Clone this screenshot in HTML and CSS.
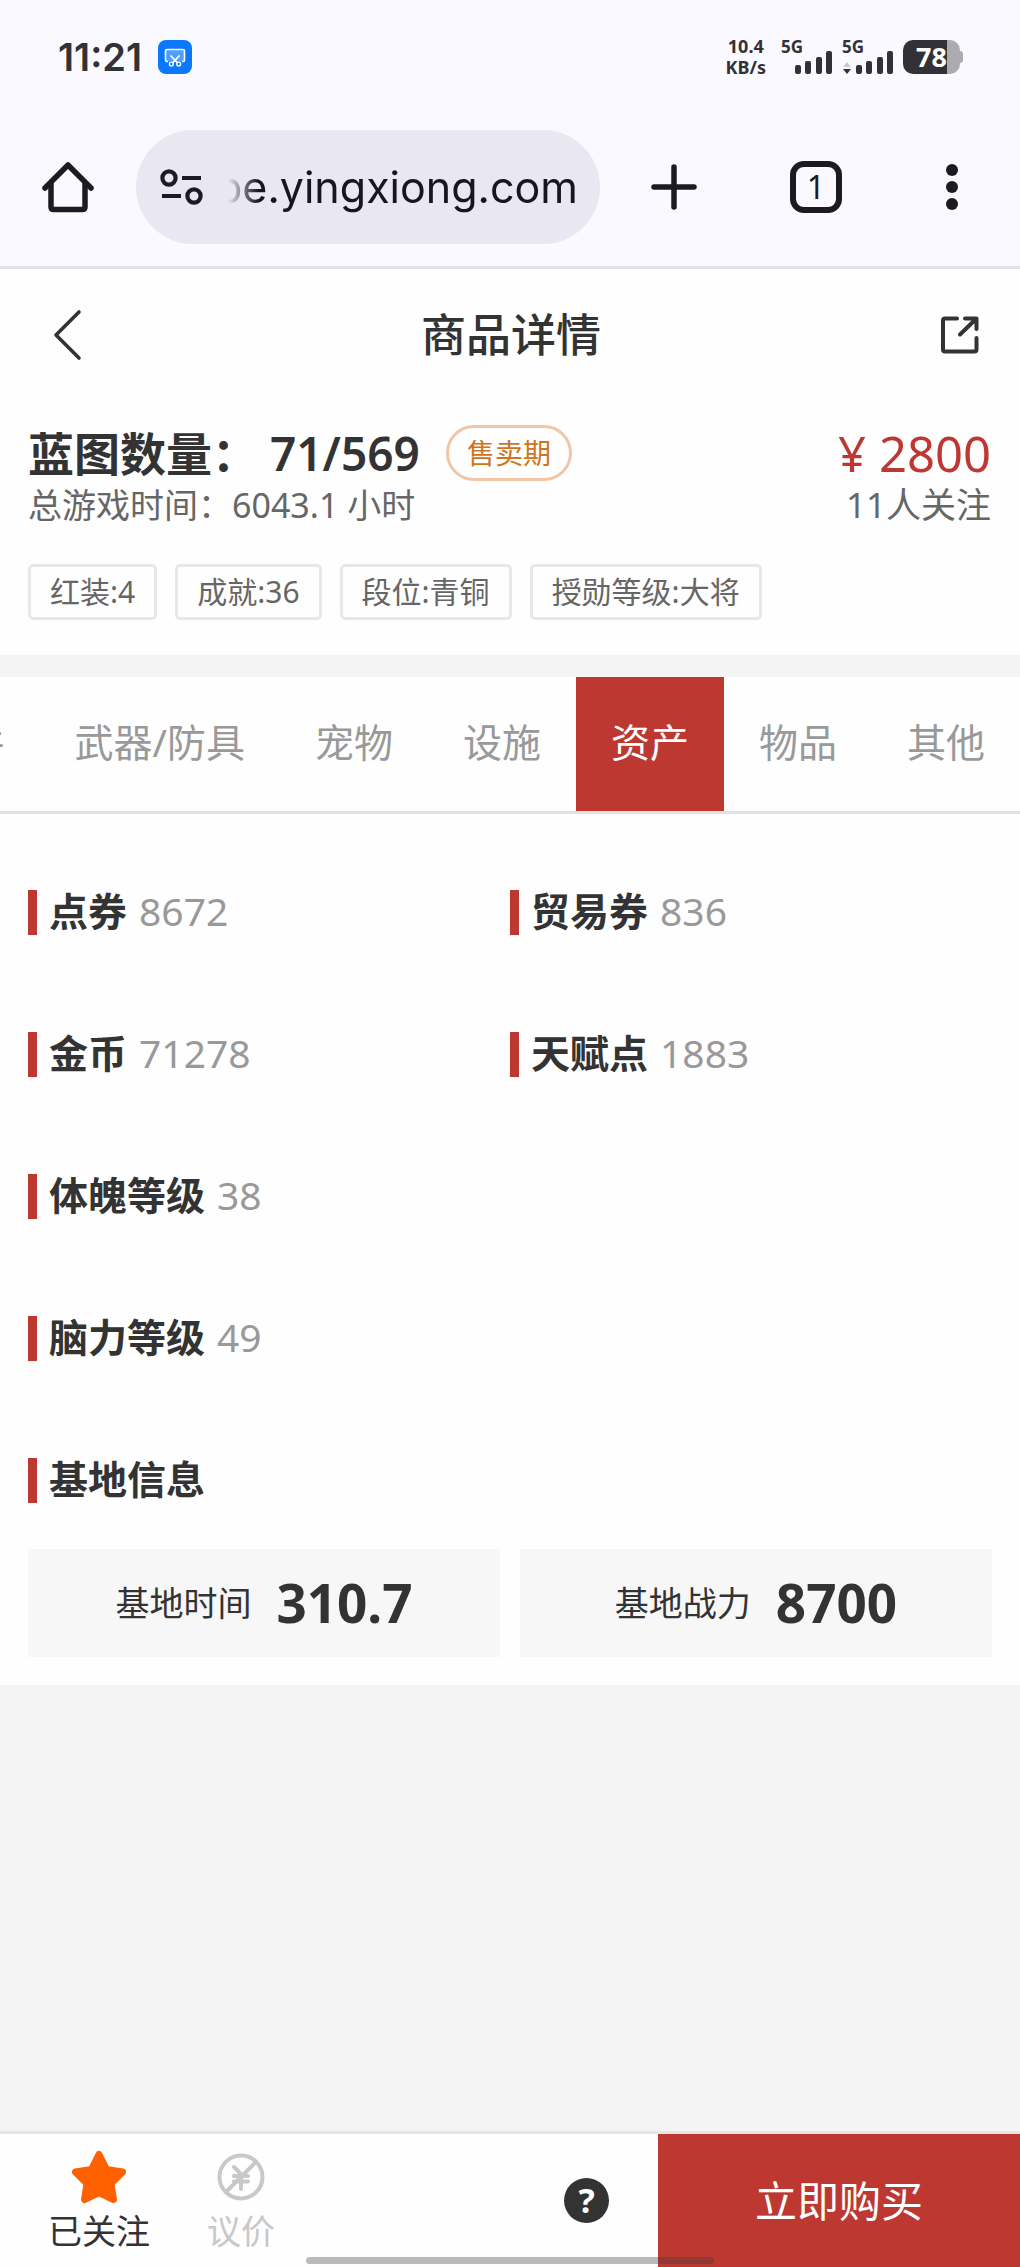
FILE: index.html
```html
<!DOCTYPE html>
<html lang="zh-CN">
<head>
  <meta charset="UTF-8">
  <meta name="viewport" content="width=device-width, initial-scale=1.0">
  <title>商品详情</title>
  <link rel="stylesheet" href="styles.css">
</head>
<body>
  <div class="browser">
    <div class="status-bar">
      <span class="status-time">11:21</span>
      <svg class="status-app" viewBox="0 0 34 34">
        <rect width="34" height="34" rx="8" fill="#0b78fb"/>
        <path d="M10 21.500H9A1.500 1.500 0 0 1 7.500 20V11A1.500 1.500 0 0 1 9 9.500H25A1.500 1.500 0 0 1 26.500 11V20A1.500 1.500 0 0 1 25 21.500H24" fill="#4f9dfc" stroke="#fff" stroke-width="1.600"/>
        <path d="M12.500 15.500L19.500 23M21.500 15.500L14.500 23" stroke="#fff" stroke-width="1.800"/>
        <circle cx="13.300" cy="24" r="1.900" fill="#0b78fb" stroke="#fff" stroke-width="1.400"/>
        <circle cx="20.700" cy="24" r="1.900" fill="#0b78fb" stroke="#fff" stroke-width="1.400"/>
      </svg>
      <div class="status-right">
        <div class="net-speed"><b>10.4</b><span>KB/s</span></div>
        <svg class="signal" viewBox="0 0 52 48">
          <text x="0" y="20">5G</text>
          <rect x="14" y="32" width="6" height="9" rx="2"/>
          <rect x="24" y="28" width="6" height="13" rx="2"/>
          <rect x="35" y="24" width="6" height="17" rx="2"/>
          <rect x="45" y="18" width="6" height="23" rx="2"/>
        </svg>
        <svg class="signal" viewBox="0 0 52 48">
          <text x="0" y="20">5G</text>
          <path d="M1 34L5 29L9 34z" fill="#c9c8ce"/>
          <path d="M1 36H9L5 41z"/>
          <rect x="14" y="32" width="6" height="9" rx="2"/>
          <rect x="24" y="28" width="6" height="13" rx="2"/>
          <rect x="35" y="24" width="6" height="17" rx="2"/>
          <rect x="45" y="18" width="6" height="23" rx="2"/>
        </svg>
        <div class="battery"><span class="battery-level">78</span></div>
      </div>
    </div>

    <div class="toolbar">
      <button class="tool-btn" aria-label="主页">
        <svg width="54" height="54" viewBox="0 0 54 54" fill="none" stroke="#1b1b21" stroke-width="5.500" stroke-linecap="round" stroke-linejoin="round">
          <path d="M4 28L27 5L50 28"/>
          <path d="M10 23V47Q10 49.500 12.500 49.500H41.500Q44 49.500 44 47V23"/>
        </svg>
      </button>
      <div class="address">
        <svg width="44" height="38" viewBox="0 0 44 38" fill="none" stroke="#1b1b21" stroke-width="4.200">
          <circle cx="9" cy="10" r="6.600"/>
          <path d="M22 10H41M2 28H21"/>
          <circle cx="34" cy="28" r="6.600"/>
        </svg>
        <input class="address-input" type="text" value="be.yingxiong.com" aria-label="网址">
      </div>
      <button class="tool-btn tool-add" aria-label="新标签页">
        <svg width="46" height="46" viewBox="0 0 46 46" stroke="#1b1b21" stroke-width="5.500" stroke-linecap="round">
          <path d="M23 3V43M3 23H43"/>
        </svg>
      </button>
      <button class="tool-btn" aria-label="标签页"><span class="tab-count">1</span></button>
      <button class="tool-btn" aria-label="菜单">
        <svg width="12" height="46" viewBox="0 0 12 46" fill="#1b1b21">
          <circle cx="6" cy="6" r="6"/>
          <circle cx="6" cy="23" r="6"/>
          <circle cx="6" cy="40" r="6"/>
        </svg>
      </button>
    </div>
  </div>

  <header class="app-header">
    <button class="icon-btn" aria-label="返回">
      <svg width="30" height="52" viewBox="0 0 30 52" fill="none" stroke="#333" stroke-width="3.600" stroke-linecap="round" stroke-linejoin="round">
        <path d="M27 3L4 26L27 49"/>
      </svg>
    </button>
    <h1>商品详情</h1>
    <button class="icon-btn" aria-label="分享">
      <svg width="40" height="40" viewBox="0 0 40 40" fill="none" stroke="#333" stroke-width="4" stroke-linecap="round" stroke-linejoin="round">
        <path d="M17 3.500H5Q3 3.500 3 5.500V34.500Q3 36.500 5 36.500H34.500Q36.500 36.500 36.500 34.500V23"/>
        <path d="M25 3.500H36.500V14M36 4L20 19.500"/>
      </svg>
    </button>
  </header>

  <section class="product">
    <div class="product-row">
      <h2>蓝图数量： 71/569</h2>
      <span class="status-pill">售卖期</span>
      <span class="price">¥ 2800</span>
    </div>
    <div class="product-row product-sub">
      <span>总游戏时间：6043.1 小时</span>
      <span class="followers">11人关注</span>
    </div>
    <ul class="tags">
      <li>红装:4</li>
      <li>成就:36</li>
      <li>段位:青铜</li>
      <li>授勋等级:大将</li>
    </ul>
  </section>

  <nav class="tabs">
    <a href="#">配件</a>
    <a href="#">武器/防具</a>
    <a href="#">宠物</a>
    <a href="#">设施</a>
    <a href="#" class="active">资产</a>
    <a href="#">物品</a>
    <a href="#">其他</a>
  </nav>

  <main class="assets">
    <div class="asset-grid">
      <div class="asset"><h3>点券</h3><span>8672</span></div>
      <div class="asset"><h3>贸易券</h3><span>836</span></div>
      <div class="asset"><h3>金币</h3><span>71278</span></div>
      <div class="asset"><h3>天赋点</h3><span>1883</span></div>
      <div class="asset wide"><h3>体魄等级</h3><span>38</span></div>
      <div class="asset wide"><h3>脑力等级</h3><span>49</span></div>
      <div class="asset wide"><h3>基地信息</h3></div>
    </div>
    <div class="base-info">
      <div class="base-card"><span>基地时间</span><strong>310.7</strong></div>
      <div class="base-card"><span>基地战力</span><strong>8700</strong></div>
    </div>
  </main>

  <footer class="bottom-bar">
    <button class="action">
      <svg width="56" height="54" viewBox="0 0 56 54">
        <path d="M28 4.500L35.500 19.500L51.500 22L40 33.500L42.500 49.500L28 42.500L13.500 49.500L16 33.500L4.500 22L20.500 19.500z" fill="#ff6000" stroke="#ff6000" stroke-width="7" stroke-linejoin="round"/>
      </svg>
      <span>已关注</span>
    </button>
    <button class="action muted">
      <svg width="48" height="54" viewBox="0 0 48 54" fill="none" stroke="#c8c8c8" stroke-width="4" stroke-linecap="round">
        <circle cx="24" cy="27" r="21.500"/>
        <path d="M39 12L9 42M17 17L24 24V39M17 26H31M17 31.500H31"/>
      </svg>
      <span>议价</span>
    </button>
    <button class="help" aria-label="帮助">?</button>
    <button class="buy">立即购买</button>
    <div class="home-indicator"></div>
  </footer>
</body>
</html>
```
FILE: styles.css
```css
* {
  margin: 0;
  padding: 0;
  box-sizing: border-box;
}

body {
  min-height: 100vh;
  display: flex;
  flex-direction: column;
  font-family: 'Noto Sans', 'Noto Sans CJK SC', sans-serif;
  background: #f4f4f4;
  color: #333;
  overflow-x: hidden;
}

button {
  border: none;
  background: none;
  font-family: inherit;
  color: inherit;
  cursor: pointer;
}

svg {
  display: block;
  flex-shrink: 0;
}

a {
  text-decoration: none;
}

ul {
  list-style: none;
}

/* Browser chrome */
.browser {
  background: #faf9ff;
  border-bottom: 3px solid #e2e1e7;
}

.status-bar {
  height: 114px;
  padding: 0 60px 0 58px;
  display: flex;
  align-items: center;
  color: #323236;
}

.status-time {
  font-family: 'Inter', sans-serif;
  font-size: 38px;
  font-weight: 600;
}

.status-app {
  width: 34px;
  height: 34px;
  margin-left: 16px;
}

.status-right {
  margin-left: auto;
  display: flex;
  align-items: center;
  gap: 9px;
}

.net-speed {
  display: flex;
  flex-direction: column;
  align-items: center;
  margin-right: 6px;
  font-size: 18px;
  font-weight: 700;
  line-height: 21px;
}

.net-speed b {
  font-weight: 700;
}

.signal {
  width: 52px;
  height: 48px;
  fill: #323236;
  font-size: 17px;
  font-weight: 700;
}

.battery {
  position: relative;
  width: 57px;
  height: 34px;
  border-radius: 10px;
  background: linear-gradient(90deg, #323236 78%, #acabb0 78%);
  color: #fff;
}

.battery::after {
  content: '';
  position: absolute;
  top: 11px;
  right: -3px;
  width: 3px;
  height: 12px;
  border-radius: 0 3px 3px 0;
  background: #acabb0;
}

.battery-level {
  display: block;
  text-align: center;
  font-size: 27px;
  font-weight: 700;
  line-height: 34px;
}

.toolbar {
  display: flex;
  align-items: center;
  padding: 16px 0 22px;
}

.tool-btn {
  flex: 0 0 136px;
  height: 114px;
  display: flex;
  align-items: center;
  justify-content: center;
}

.tool-add {
  flex-basis: 148px;
}

.address {
  flex: 1;
  min-width: 0;
  height: 114px;
  padding: 0 22px 0 24px;
  display: flex;
  align-items: center;
  gap: 6px;
  border-radius: 57px;
  background: #e9e7f1;
}

.address-input {
  flex: 1;
  min-width: 0;
  height: 60px;
  border: none;
  outline: none;
  background: none;
  font-family: 'Inter', sans-serif;
  font-size: 43px;
  color: #17161d;
  text-align: right;
  -webkit-mask-image: linear-gradient(90deg, transparent 18px, #000 48px);
  mask-image: linear-gradient(90deg, transparent 18px, #000 48px);
}

.tab-count {
  width: 52px;
  height: 52px;
  border: 6px solid #1b1b21;
  border-radius: 14px;
  font-size: 32px;
  line-height: 40px;
  color: #1b1b21;
}

/* Page header */
.app-header {
  height: 132px;
  padding: 0 40px 0 52px;
  display: flex;
  align-items: center;
  background: #fefefe;
}

.app-header h1 {
  flex: 1;
  padding-bottom: 6px;
  font-size: 45px;
  font-weight: 500;
  text-align: center;
}

.icon-btn {
  width: 40px;
  display: flex;
}

.icon-btn:first-child {
  width: 30px;
}

/* Product summary */
.product {
  padding: 24px 29px 35px 28px;
  margin-bottom: 22px;
  background: #fefefe;
}

.product-row {
  display: flex;
  align-items: center;
  line-height: 56px;
}

.product h2 {
  font-size: 46px;
  font-weight: 600;
}

.status-pill {
  margin-left: 26px;
  padding: 0 18px;
  border: 3px solid #f0c6a6;
  border-radius: 28px;
  font-size: 28px;
  line-height: 50px;
  color: #cf7420;
}

.price {
  margin-left: auto;
  font-size: 49px;
  color: #bd3832;
}

.product-sub {
  font-size: 34px;
  line-height: 48px;
  color: #666;
}

.followers {
  margin-left: auto;
  font-size: 35px;
}

.tags {
  display: flex;
  flex-wrap: wrap;
  gap: 18px;
  margin-top: 35px;
}

.tags li {
  padding: 0 19px;
  border: 3px solid #e8e8e8;
  border-radius: 5px;
  font-size: 30px;
  line-height: 50px;
  color: #666;
}

/* Category tabs */
.tabs {
  display: flex;
  justify-content: flex-end;
  overflow: hidden;
  background: #fefefe;
  border-bottom: 3px solid #e2e2e2;
}

.tabs a {
  flex-shrink: 0;
  padding: 0 35px 4px;
  font-size: 39px;
  line-height: 130px;
  color: #999;
}

.tabs a.active {
  background: #be3832;
  color: #fff;
}

/* Assets */
.assets {
  padding: 76px 28px 28px;
  background: #fefefe;
}

.asset-grid {
  display: grid;
  grid-template-columns: 1fr 1fr;
  row-gap: 97px;
}

.asset {
  display: flex;
  gap: 12px;
  padding: 0 0 3px 12px;
  border-left: 9px solid #be3832;
  font-size: 39px;
  line-height: 42px;
}

.asset.wide {
  grid-column: 1 / -1;
}

.asset h3 {
  font-size: 39px;
  font-weight: 700;
}

.asset span {
  color: #999;
}

.base-info {
  display: grid;
  grid-template-columns: 1fr 1fr;
  gap: 20px;
  margin-top: 46px;
}

.base-card {
  display: flex;
  align-items: center;
  justify-content: center;
  gap: 25px;
  background: #f7f7f7;
  font-size: 34px;
  line-height: 108px;
}

.base-card strong {
  font-size: 53px;
}

/* Bottom bar */
.bottom-bar {
  position: relative;
  margin-top: auto;
  padding-left: 48px;
  display: flex;
  align-items: center;
  background: #fefefe;
  border-top: 3px solid #e6e6e6;
}

.action {
  height: 133px;
  padding-top: 16px;
  margin-right: 57px;
  display: flex;
  flex-direction: column;
  align-items: center;
  font-size: 34px;
  line-height: 54px;
}

.action.muted {
  color: #c8c8c8;
}

.help {
  width: 45px;
  height: 45px;
  margin: 0 49px 0 auto;
  border-radius: 50%;
  background: #333;
  color: #fff;
  font-size: 34px;
  font-weight: 700;
  line-height: 45px;
}

.buy {
  align-self: stretch;
  padding: 0 97px 4px;
  background: #be3832;
  color: #fff;
  font-size: 42px;
}

.home-indicator {
  position: absolute;
  left: 30%;
  right: 30%;
  bottom: 3px;
  height: 7px;
  border-radius: 4px;
  background: rgba(60, 60, 60, 0.35);
}
```
